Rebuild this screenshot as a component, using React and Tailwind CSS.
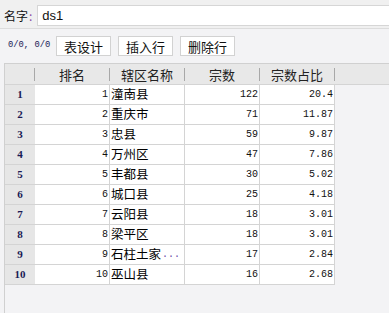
import React from 'react'

const rows = [
  { rank: 1, name: '潼南县', count: 122, ratio: '20.4' },
  { rank: 2, name: '重庆市', count: 71, ratio: '11.87' },
  { rank: 3, name: '忠县', count: 59, ratio: '9.87' },
  { rank: 4, name: '万州区', count: 47, ratio: '7.86' },
  { rank: 5, name: '丰都县', count: 30, ratio: '5.02' },
  { rank: 6, name: '城口县', count: 25, ratio: '4.18' },
  { rank: 7, name: '云阳县', count: 18, ratio: '3.01' },
  { rank: 8, name: '梁平区', count: 18, ratio: '3.01' },
  { rank: 9, name: '石柱土家', more: true, count: 17, ratio: '2.84' },
  { rank: 10, name: '巫山县', count: 16, ratio: '2.68' },
]

const cjk = "font-['Noto_Sans_CJK_SC',sans-serif]"
const mono = "font-['Liberation_Mono',monospace]"

function HeadCell({ label, width }) {
  return (
    <div className={`flex items-center h-full ${width}`}>
      <span className="flex-1 text-center text-[13px] text-[#222] leading-none">{label}</span>
      <div className="w-px h-[13px] bg-[#a8a8a8]" />
    </div>
  )
}

export default function App() {
  return (
    <div className={`w-[389px] h-[313px] bg-[#f3f3f5] overflow-hidden flex flex-col ${cjk}`}>
      <div className="flex items-center h-[29px] pt-[5px] pb-[2px] pl-[4px] bg-[#f0f0f0] border-b border-[#dcdcdc]">
        <span className="text-[12px] text-[#111] leading-none">名字</span>
        <span className="text-[12px] text-[#8a4aa8] leading-none ml-[1px] mr-[5px]">:</span>
        <div className="flex-1 h-[21px] bg-white border border-[#d6d6d6] border-r-0 flex items-center pl-[4px]">
          <span className="font-['Liberation_Sans',sans-serif] text-[13px] text-[#111]">ds1</span>
        </div>
      </div>

      <div className="flex items-center h-[34px] pl-[8px] gap-[6px]">
        <span className={`${mono} text-[8.8px] text-[#1a1a55] w-[42px] whitespace-nowrap`}>0/0, 0/0</span>
        {['表设计', '插入行', '删除行'].map(b => (
          <button key={b} className="h-[20px] w-[55px] bg-white border border-[#d2d2d2] text-[13px] text-[#111] leading-none flex items-center justify-center mr-[1px]">
            {b}
          </button>
        ))}
      </div>

      <div className="flex-1 ml-[4px] border-l border-t border-[#d0d0d0] flex flex-col">
        <div className="flex h-[21px] bg-[#e8e8e8] border-b border-[#d4d4d4]">
          <HeadCell label="" width="w-[30px]" />
          <HeadCell label="排名" width="w-[75px]" />
          <HeadCell label="辖区名称" width="w-[75px]" />
          <HeadCell label="宗数" width="w-[75px]" />
          <HeadCell label="宗数占比" width="w-[75px]" />
        </div>
        {rows.map(r => (
          <div key={r.rank} className="flex h-[20px]">
            <div className={`w-[30px] bg-[#e6e6e6] border-b border-[#d4d4d4] flex items-center justify-center font-['Liberation_Serif',serif] text-[11px] font-bold text-[#1a1a55]`}>
              {r.rank}
            </div>
            <div className={`w-[75px] bg-white border-b border-r border-[#d4d4d4] flex items-center justify-end pr-[1px] ${mono} text-[10px] text-[#111]`}>
              {r.rank}
            </div>
            <div className="w-[75px] bg-white border-b border-r border-[#d4d4d4] flex items-center pl-[1px] text-[12.5px] text-[#000] whitespace-nowrap overflow-hidden">
              {r.name}
              {r.more && <span className={`${mono} text-[10px] text-[#6a4aa8] ml-[1px]`}>...</span>}
            </div>
            <div className={`w-[75px] bg-white border-b border-r border-[#d4d4d4] flex items-center justify-end pr-[1px] ${mono} text-[10px] text-[#111]`}>
              {r.count}
            </div>
            <div className={`w-[75px] bg-white border-b border-r border-[#d4d4d4] flex items-center justify-end pr-[1px] ${mono} text-[10px] text-[#111]`}>
              {r.ratio}
            </div>
          </div>
        ))}
      </div>
    </div>
  )
}
